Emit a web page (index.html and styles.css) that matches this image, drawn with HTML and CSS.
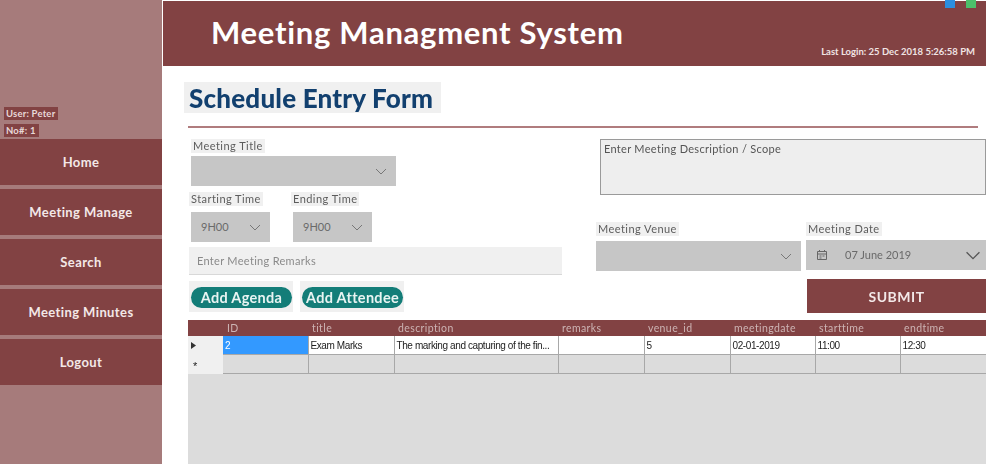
FILE: index.html
```html
<!DOCTYPE html>
<html lang="en">
<head>
<meta charset="UTF-8" />
<title>Meeting Managment System</title>
<link rel="stylesheet" href="styles.css">
</head>
<body>

<div class="app">
  <aside class="sidebar">
    <div class="user-box">
      <span class="user-tag">User: Peter</span>
      <span class="user-tag">No#: 1</span>
    </div>
    <nav class="nav">
      <a class="nav-item">Home</a>
      <a class="nav-item">Meeting Manage</a>
      <a class="nav-item">Search</a>
      <a class="nav-item">Meeting Minutes</a>
      <a class="nav-item">Logout</a>
    </nav>
  </aside>

  <div class="main">
    <header class="topbar">
      <h1 class="app-title">Meeting Managment System</h1>
      <span class="last-login">Last Login: 25 Dec 2018 5:26:58 PM</span>
      <div class="win-buttons">
        <span class="win-btn win-min"></span>
        <span class="win-btn win-max"></span>
      </div>
    </header>

    <section class="content">
      <h2 class="form-title">Schedule Entry Form</h2>
      <div class="rule"></div>

      <div class="form-cols">
        <div class="col-left">
          <label class="field-label label-title">Meeting Title</label>
          <div class="select select-title"><svg class="chev" viewBox="0 0 12 7"><path d="M1 1l5 5 5-5"/></svg></div>

          <div class="time-row">
            <div class="time-field">
              <label class="field-label">Starting Time</label>
              <div class="select select-time">9H00<svg class="chev" viewBox="0 0 12 7"><path d="M1 1l5 5 5-5"/></svg></div>
            </div>
            <div class="time-field">
              <label class="field-label">Ending Time</label>
              <div class="select select-time">9H00<svg class="chev" viewBox="0 0 12 7"><path d="M1 1l5 5 5-5"/></svg></div>
            </div>
          </div>

          <div class="remarks">Enter Meeting Remarks</div>

          <div class="add-row">
            <div class="add-wrap"><button class="pill">Add Agenda</button></div>
            <div class="add-wrap"><button class="pill">Add Attendee</button></div>
          </div>
        </div>

        <div class="col-right">
          <div class="description">Enter Meeting Description / Scope</div>
          <div class="venue-row">
            <div class="venue-field">
              <label class="field-label">Meeting Venue</label>
              <div class="select select-venue"><svg class="chev" viewBox="0 0 12 7"><path d="M1 1l5 5 5-5"/></svg></div>
            </div>
            <div class="date-field">
              <label class="field-label">Meeting Date</label>
              <div class="select select-date">
                <svg class="cal" viewBox="0 0 12 12"><path d="M1.5 2.5h9v8h-9zM1.5 5h9M3.5 1v2M8.5 1v2M3.5 7h2M6.5 7h2M3.5 9h2"/></svg>
                <span>07 June 2019</span>
                <svg class="chev chev-big" viewBox="0 0 12 7"><path d="M1 1l5 5 5-5"/></svg>
              </div>
            </div>
          </div>
          <button class="submit">SUBMIT</button>
        </div>
      </div>

      <div class="grid-area">
        <table class="grid">
          <colgroup>
            <col class="c-head"><col class="c-85"><col class="c-86"><col class="c-164"><col class="c-86"><col class="c-86"><col class="c-85"><col class="c-85"><col class="c-86">
          </colgroup>
          <thead>
            <tr><th></th><th>ID</th><th>title</th><th>description</th><th>remarks</th><th>venue_id</th><th>meetingdate</th><th>starttime</th><th>endtime</th></tr>
          </thead>
          <tbody>
            <tr class="row-data">
              <td class="row-head"><svg class="mark" viewBox="0 0 5 7"><path d="M0 0l5 3.5L0 7z"/></svg></td>
              <td class="cell-selected">2</td><td>Exam Marks</td><td>The marking and capturing of the fin...</td><td></td><td>5</td><td>02-01-2019</td><td>11:00</td><td>12:30</td>
            </tr>
            <tr class="row-new">
              <td class="row-head"><span class="star">*</span></td>
              <td></td><td></td><td></td><td></td><td></td><td></td><td></td><td></td>
            </tr>
          </tbody>
        </table>
      </div>
    </section>
  </div>
</div>

</body>
</html>
```

FILE: styles.css
```css
html, body {
  margin: 0;
  height: 100%;
  overflow: hidden;
}
body {
  font-family: Lato, "Open Sans", sans-serif;
  background: white;
}
.app {
  display: flex;
  height: 464px;
  filter: blur(0.45px);
}

/* Menu lateral */
.sidebar {
  width: 162px;
  background: #a67b7b;
  display: flex;
  flex-direction: column;
  flex-shrink: 0;
  padding-top: 107px;
  box-sizing: border-box;
}
.user-box {
  display: flex;
  flex-direction: column;
  align-items: flex-start;
  gap: 4px;
  padding-left: 4px;
  height: 32px;
}
.user-tag {
  background: #824243;
  color: #e8d8d8;
  font-size: 9.5px;
  font-weight: 700;
  line-height: 13px;
  padding: 0 3px 0 2px;
  letter-spacing: 0.2px;
}
.nav {
  display: flex;
  flex-direction: column;
  gap: 4px;
}
.nav-item {
  height: 46px;
  background: #824243;
  color: #f3e8e8;
  font-size: 13px;
  font-weight: 700;
  letter-spacing: 0.4px;
  display: flex;
  align-items: center;
  justify-content: center;
}

.main {
  flex: 1;
  margin-left: 1px;
  min-width: 0;
}
.topbar {
  height: 65px;
  margin-top: 1px;
  background: #824243;
  position: relative;
  display: flex;
  justify-content: space-between;
  padding: 0 11px 0 48px;
}
.app-title {
  margin: 13px 0 0;
  color: white;
  font-size: 31px;
  font-weight: 700;
  letter-spacing: 0.72px;
  line-height: 36px;
}
.last-login {
  margin-top: 45px;
  color: #f0e4e4;
  font-size: 9.5px;
  font-weight: 700;
  line-height: 12px;
}
.win-buttons {
  position: absolute;
  top: -1px;
  right: 10px;
  display: flex;
  gap: 11px;
}
.win-btn {
  width: 10px;
  height: 8px;
}
.win-min { background: #2b8fe0; }
.win-max { background: #4cc06a; }

.content {
  padding: 16px 0 0 21px;
}
.form-title {
  display: table;
  margin: 0;
  background: #f0f0f0;
  color: #12406f;
  font-size: 26px;
  font-weight: 900;
  letter-spacing: 0.2px;
  line-height: 29px;
  padding: 2px 8px 0 5px;
}
.rule {
  height: 2px;
  width: 790px;
  margin: 13px 0 0 4px;
  background: #b07c7e;
}

.form-cols {
  display: flex;
  height: 174px;
  margin-top: 11px;
}
.col-left {
  width: 412px;
  padding-left: 5px;
  box-sizing: border-box;
}
.col-right {
  flex: 1;
  min-width: 0;
}

.field-label {
  display: table;
  background: #f0f0f0;
  color: #5c5c5c;
  font-size: 11px;
  line-height: 14px;
  padding: 0 2px;
  letter-spacing: 0.45px;
}
.label-title {
  margin-left: 2px;
}
.select {
  position: relative;
  background: #c6c6c6;
  color: #6a6a6a;
  height: 30px;
  font-size: 11px;
  line-height: 30px;
  box-sizing: border-box;
}
.chev {
  position: absolute;
  right: 9px;
  top: 12px;
  width: 12px;
  height: 7px;
  fill: none;
  stroke: #777;
  stroke-width: 1;
}
.select-title {
  width: 205px;
  margin: 3px 0 0 2px;
}
.time-row {
  display: flex;
  gap: 21px;
  margin-top: 6px;
}
.time-field .field-label {
  margin-bottom: 6px;
}
.select-time {
  width: 79px;
  margin-left: 2px;
  padding-left: 10px;
}
.remarks {
  width: 373px;
  height: 28px;
  margin-top: 5px;
  background: #f0f0f0;
  border-bottom: 1px solid #d8d8d8;
  box-sizing: border-box;
  color: #8a8a8a;
  font-size: 11px;
  line-height: 27px;
  padding-left: 8px;
  letter-spacing: 0.3px;
}
.add-row {
  display: flex;
  gap: 7px;
  margin-top: 6px;
}
.add-wrap {
  background: #f0f0f0;
  padding: 6px 1px 4px 2px;
  display: flex;
}
.pill {
  border: none;
  border-radius: 11px;
  background: #137d78;
  color: #e8f4f2;
  font-family: inherit;
  font-size: 14.5px;
  font-weight: 700;
  height: 21px;
  width: 101px;
  padding: 0;
  letter-spacing: 0.3px;
  white-space: nowrap;
}

.description {
  margin-left: 4px;
  height: 56px;
  background: #eeeeee;
  border: 1px solid #9a9a9a;
  box-sizing: border-box;
  color: #555;
  font-size: 11px;
  line-height: 16px;
  padding: 1px 3px;
  letter-spacing: 0.3px;
}
.venue-row {
  display: flex;
  gap: 5px;
  margin-top: 27px;
}
.venue-row .field-label {
  margin-bottom: 5px;
}
.select-venue {
  width: 205px;
}
.date-field {
  flex: 1;
}
.select-date {
  display: flex;
  align-items: center;
  padding-left: 10px;
  gap: 17px;
  margin-top: -1px;
}
.cal {
  width: 12px;
  height: 12px;
  fill: none;
  stroke: #666;
  stroke-width: 1;
}
.chev-big {
  width: 16px;
  height: 9px;
  right: 5px;
  top: 11px;
  stroke: #555;
}
.submit {
  display: block;
  width: 179px;
  height: 34px;
  margin: 8px 0 0 211px;
  border: none;
  background: #824243;
  color: #f3e8e8;
  font-family: inherit;
  font-size: 14px;
  font-weight: 700;
  letter-spacing: 0.5px;
}

/* Grade de dados */
.grid-area {
  margin: 7px 0 0 4px;
  height: 144px;
  background: #dcdcdc;
}
.grid {
  table-layout: fixed;
  width: 798px;
  border-collapse: collapse;
}
.c-head { width: 35px; }
.c-86 { width: 86px; }
.c-85 { width: 85px; }
.c-164 { width: 164px; }
.grid th {
  height: 16px;
  padding: 0 0 0 4px;
  background: #824243;
  color: #cdb4b4;
  font-size: 10.5px;
  font-weight: 400;
  text-align: left;
  letter-spacing: 0.4px;
}
.grid td {
  padding: 0 0 0 2px;
  border-right: 1px solid #a8a8a8;
  border-bottom: 1px solid #a8a8a8;
  font-family: "Liberation Sans", Arial, sans-serif;
  font-size: 10px;
  letter-spacing: -0.4px;
  color: #222;
  white-space: nowrap;
  overflow: hidden;
}
.row-data td {
  height: 18px;
  background: white;
}
.row-new td {
  height: 18px;
  background: #dcdcdc;
}
.grid .row-head {
  background: #f0f0f0;
  border: none;
  padding-left: 3px;
}
.grid .cell-selected {
  background: #3399ff;
  color: white;
}
.mark {
  display: block;
  width: 5px;
  height: 7px;
  fill: #333;
}
.star {
  font-size: 11px;
  line-height: 11px;
  position: relative;
  top: 2px;
  left: 2px;
}
```
